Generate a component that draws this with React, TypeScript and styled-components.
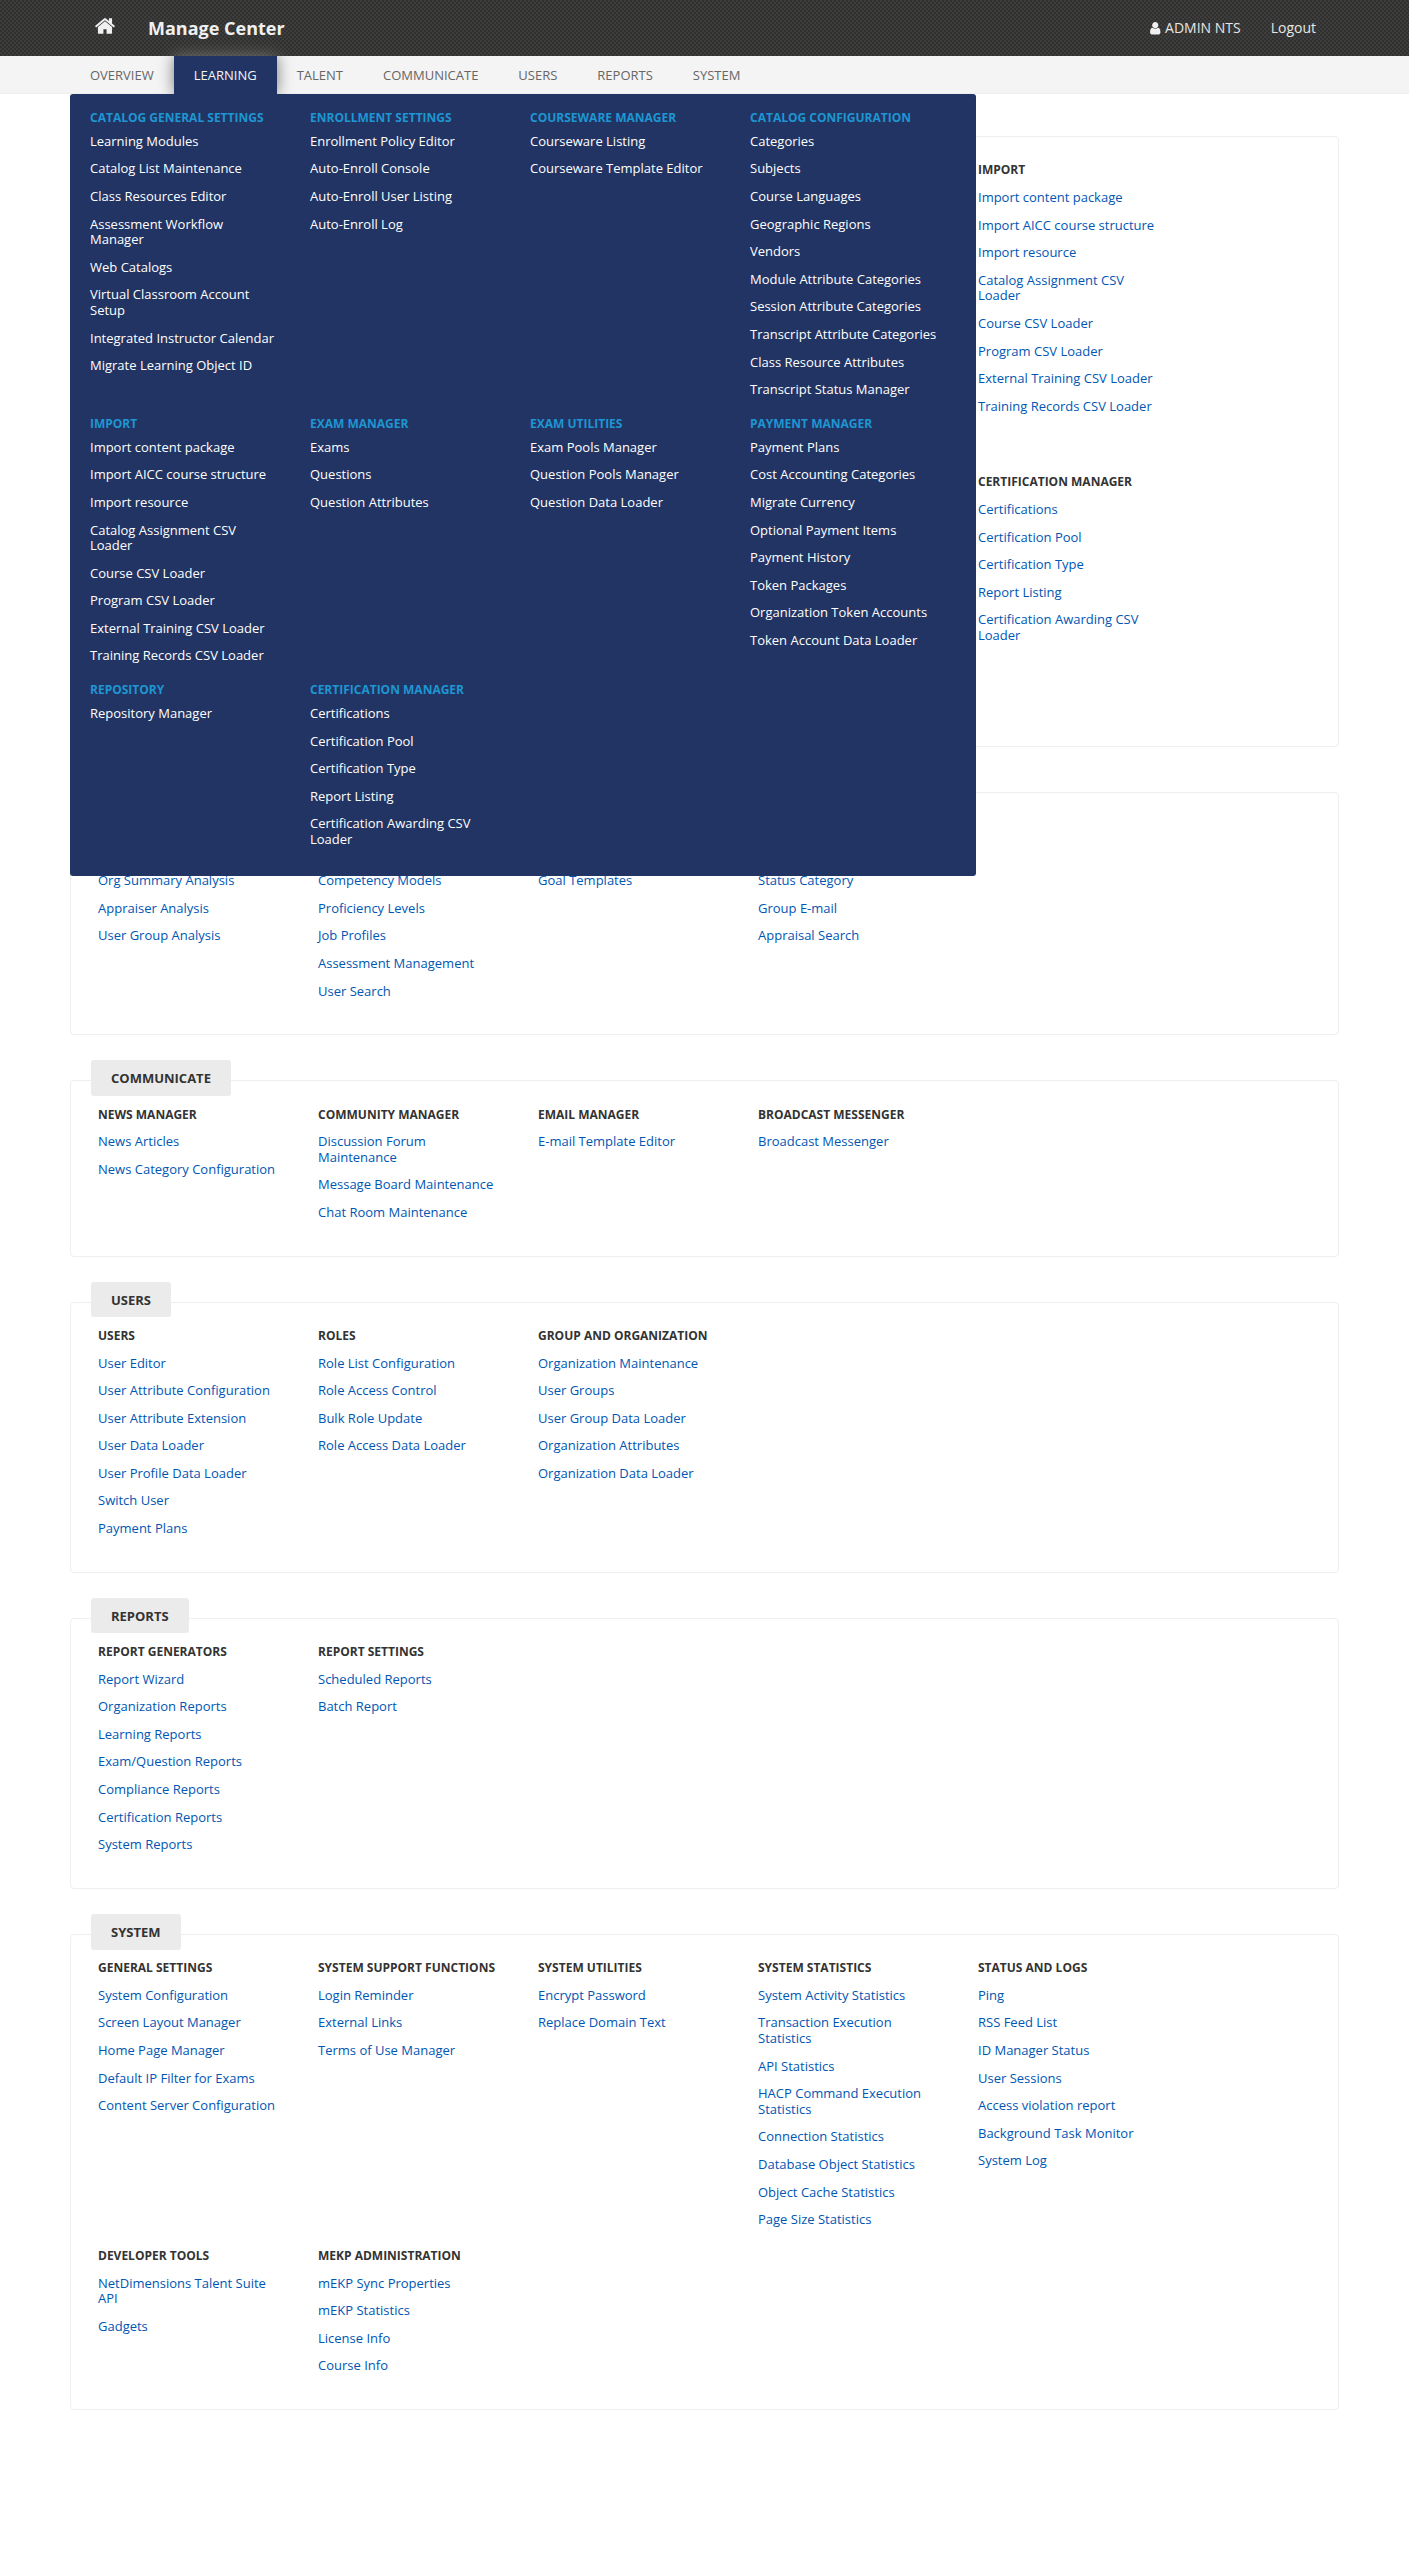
import React from 'react';
import styled, { createGlobalStyle, css } from 'styled-components';

const GlobalStyle = createGlobalStyle`
  * { box-sizing: border-box; }
  body {
    margin: 0;
    background: #fff;
    color: #333;
    font-family: "Open Sans", "Noto Sans", sans-serif;
    font-size: 13px;
    line-height: 15.6px;
  }
  ul { list-style: none; margin: 0; padding: 0; }
  a { color: inherit; text-decoration: none; }
`;

type Group = { title: string; links: string[] };
type Section = { name: string; groups: Group[] };

const g = (title: string, ...links: string[]): Group => ({ title, links });

const catalogGeneral = g('CATALOG GENERAL SETTINGS', 'Learning Modules', 'Catalog List Maintenance', 'Class Resources Editor', 'Assessment Workflow Manager', 'Web Catalogs', 'Virtual Classroom Account Setup', 'Integrated Instructor Calendar', 'Migrate Learning Object ID');
const enrollment = g('ENROLLMENT SETTINGS', 'Enrollment Policy Editor', 'Auto-Enroll Console', 'Auto-Enroll User Listing', 'Auto-Enroll Log');
const courseware = g('COURSEWARE MANAGER', 'Courseware Listing', 'Courseware Template Editor');
const catalogConfig = g('CATALOG CONFIGURATION', 'Categories', 'Subjects', 'Course Languages', 'Geographic Regions', 'Vendors', 'Module Attribute Categories', 'Session Attribute Categories', 'Transcript Attribute Categories', 'Class Resource Attributes', 'Transcript Status Manager');
const importer = g('IMPORT', 'Import content package', 'Import AICC course structure', 'Import resource', 'Catalog Assignment CSV Loader', 'Course CSV Loader', 'Program CSV Loader', 'External Training CSV Loader', 'Training Records CSV Loader');
const examManager = g('EXAM MANAGER', 'Exams', 'Questions', 'Question Attributes');
const examUtilities = g('EXAM UTILITIES', 'Exam Pools Manager', 'Question Pools Manager', 'Question Data Loader');
const payment = g('PAYMENT MANAGER', 'Payment Plans', 'Cost Accounting Categories', 'Migrate Currency', 'Optional Payment Items', 'Payment History', 'Token Packages', 'Organization Token Accounts', 'Token Account Data Loader');
const repository = g('REPOSITORY', 'Repository Manager');
const certification = g('CERTIFICATION MANAGER', 'Certifications', 'Certification Pool', 'Certification Type', 'Report Listing', 'Certification Awarding CSV Loader');

const learning = [catalogGeneral, enrollment, courseware, catalogConfig, importer, examManager, examUtilities, payment, repository, certification];

const sections: Section[] = [
  { name: 'LEARNING', groups: learning },
  {
    name: 'TALENT',
    groups: [
      g('ANALYSIS', 'Analysis', 'Org Summary Analysis', 'Appraiser Analysis', 'User Group Analysis'),
      g('COMPETENCIES', 'Competencies', 'Competency Models', 'Proficiency Levels', 'Job Profiles', 'Assessment Management', 'User Search'),
      g('GOALS', 'Goals', 'Goal Templates'),
      g('APPRAISALS', 'Appraisals', 'Status Category', 'Group E-mail', 'Appraisal Search'),
    ],
  },
  {
    name: 'COMMUNICATE',
    groups: [
      g('NEWS MANAGER', 'News Articles', 'News Category Configuration'),
      g('COMMUNITY MANAGER', 'Discussion Forum Maintenance', 'Message Board Maintenance', 'Chat Room Maintenance'),
      g('EMAIL MANAGER', 'E-mail Template Editor'),
      g('BROADCAST MESSENGER', 'Broadcast Messenger'),
    ],
  },
  {
    name: 'USERS',
    groups: [
      g('USERS', 'User Editor', 'User Attribute Configuration', 'User Attribute Extension', 'User Data Loader', 'User Profile Data Loader', 'Switch User', 'Payment Plans'),
      g('ROLES', 'Role List Configuration', 'Role Access Control', 'Bulk Role Update', 'Role Access Data Loader'),
      g('GROUP AND ORGANIZATION', 'Organization Maintenance', 'User Groups', 'User Group Data Loader', 'Organization Attributes', 'Organization Data Loader'),
    ],
  },
  {
    name: 'REPORTS',
    groups: [
      g('REPORT GENERATORS', 'Report Wizard', 'Organization Reports', 'Learning Reports', 'Exam/Question Reports', 'Compliance Reports', 'Certification Reports', 'System Reports'),
      g('REPORT SETTINGS', 'Scheduled Reports', 'Batch Report'),
    ],
  },
  {
    name: 'SYSTEM',
    groups: [
      g('GENERAL SETTINGS', 'System Configuration', 'Screen Layout Manager', 'Home Page Manager', 'Default IP Filter for Exams', 'Content Server Configuration'),
      g('SYSTEM SUPPORT FUNCTIONS', 'Login Reminder', 'External Links', 'Terms of Use Manager'),
      g('SYSTEM UTILITIES', 'Encrypt Password', 'Replace Domain Text'),
      g('SYSTEM STATISTICS', 'System Activity Statistics', 'Transaction Execution Statistics', 'API Statistics', 'HACP Command Execution Statistics', 'Connection Statistics', 'Database Object Statistics', 'Object Cache Statistics', 'Page Size Statistics'),
      g('STATUS AND LOGS', 'Ping', 'RSS Feed List', 'ID Manager Status', 'User Sessions', 'Access violation report', 'Background Task Monitor', 'System Log'),
      g('DEVELOPER TOOLS', 'NetDimensions Talent Suite API', 'Gadgets'),
      g('MEKP ADMINISTRATION', 'mEKP Sync Properties', 'mEKP Statistics', 'License Info', 'Course Info'),
    ],
  },
];

const menuRows = [
  [catalogGeneral, enrollment, courseware, catalogConfig],
  [importer, examManager, examUtilities, payment],
  [repository, certification],
];

const tabs = ['OVERVIEW', 'LEARNING', 'TALENT', 'COMMUNICATE', 'USERS', 'REPORTS', 'SYSTEM'];

const Page = styled.div`
  min-height: 2552px;
`;

const Header = styled.header`
  display: flex;
  align-items: center;
  height: 56px;
  padding: 0 93px 0 93.5px;
  color: #f0f0f0;
  background-color: #3d3d3b;
  background-image:
    linear-gradient(45deg, #2f2f2f 25%, transparent 25%, transparent 75%, #2f2f2f 75%),
    linear-gradient(45deg, #323232 25%, transparent 25%, transparent 75%, #323232 75%);
  background-size: 4px 4px;
  background-position: 0 0, 2px 2px;
`;

const HomeIcon = styled.svg`
  width: 22px;
  height: 22px;
  margin-top: -4px;
  fill: #f0f0f0;
`;

const Title = styled.h1`
  margin: 0 auto 0 32.5px;
  font-size: 18px;
  line-height: 24px;
  font-weight: 700;
`;

const UserIcon = styled.svg`
  width: 14.5px;
  height: 14.5px;
  margin-right: 2.5px;
  fill: #f0f0f0;
`;

const HeaderLink = styled.a`
  display: flex;
  align-items: center;
  margin-left: 30px;
  font-size: 14px;
  line-height: 20px;
  color: #e6e6e6;
`;

const Nav = styled.nav`
  position: relative;
  display: flex;
  height: 38px;
  padding-left: 70px;
  background: #f4f4f4;
  border-bottom: 1px solid #eee;
`;

const Tab = styled.a<{ $active?: boolean }>`
  height: 38px;
  padding: 0 20px;
  line-height: 38px;
  color: #666;
  ${(p) =>
    p.$active &&
    css`
      color: #f4f4f4;
      background: #223463;
      box-shadow: 0 0 15px #777;
      clip-path: inset(-20px -20px 0 -20px);
    `}
`;

const MegaMenu = styled.div`
  position: absolute;
  top: 38px;
  left: 70px;
  z-index: 2;
  width: 906px;
  height: 782px;
  padding: 14px 0 0 20px;
  color: #fff;
  background: #223463;
  border-radius: 3px;
`;

const Row = styled.div`
  display: flex;
`;

const Main = styled.main`
  display: flex;
  flex-direction: column;
  gap: 45px;
  padding: 42px 70px 0;
`;

const Panel = styled.section`
  display: flex;
  flex-direction: column;
  align-items: flex-start;
  padding: 0 0 17.8px 20px;
  border: 1px solid #eee;
  border-radius: 4px;
`;

const PanelLabel = styled.h2`
  height: 35.6px;
  margin: -20.8px 0 7.4px;
  padding: 10.8px 20px 9.2px;
  font-size: 13px;
  font-weight: 700;
  background: #ebebeb;
  border-radius: 3px;
`;

const Groups = styled.div`
  display: grid;
  grid-template-columns: repeat(5, 220px);
  padding-left: 7px;
`;

const Column = styled.div<{ $menu?: boolean }>`
  width: 220px;
  padding-right: 32px;
  color: ${(p) => (p.$menu ? '#fff' : '#0056b3')};
`;

const Heading = styled.h3<{ $menu?: boolean }>`
  margin: 0;
  height: ${(p) => (p.$menu ? '25.8px' : '30.8px')};
  padding-top: ${(p) => (p.$menu ? '1.9px' : '3.3px')};
  font-size: 12px;
  font-weight: 700;
  white-space: nowrap;
  color: ${(p) => (p.$menu ? '#1e96d2' : '#333')};
`;

const Links = styled.ul<{ $menu?: boolean }>`
  padding-bottom: ${(p) => (p.$menu ? '4.2px' : '5.2px')};
`;

const LinkItem = styled.li`
  padding-bottom: 12px;
`;

function LinkColumn({ group, menu }: { group: Group; menu?: boolean }) {
  return (
    <Column $menu={menu}>
      <Heading $menu={menu}>{group.title}</Heading>
      <Links $menu={menu}>
        {group.links.map((l) => (
          <LinkItem key={l}>
            <a href="#">{l}</a>
          </LinkItem>
        ))}
      </Links>
    </Column>
  );
}

export default function App() {
  return (
    <Page>
      <GlobalStyle />
      <Header>
        <HomeIcon viewBox="0 0 1792 1792">
          <path d="M1472 992v480q0 26-19 45t-45 19h-384v-384h-256v384h-384q-26 0-45-19t-19-45v-480q0-1 .5-3t.5-3l575-474 575 474q1 2 1 6zm223-69l-62 74q-8 9-21 11h-3q-13 0-21-7l-692-577-692 577q-12 8-24 7-13-2-21-11l-62-74q-8-10-7-23.5t11-21.5l719-599q32-26 76-26t76 26l244 204v-195q0-14 9-23t23-9h192q14 0 23 9t9 23v408l219 182q10 8 11 21.5t-7 23.5z" />
        </HomeIcon>
        <Title>Manage Center</Title>
        <HeaderLink href="#">
          <UserIcon viewBox="0 0 1792 1792">
            <path d="M1536 1399q0 109-62.5 187t-150.5 78h-854q-88 0-150.5-78t-62.5-187q0-85 8.5-160.5t31.5-152 58.5-131 94-89 134.5-34.5q131 128 313 128t313-128q76 0 134.5 34.5t94 89 58.5 131 31.5 152 8.5 160.5zm-256-887q0 159-112.5 271.5t-271.5 112.5-271.5-112.5-112.5-271.5 112.5-271.5 271.5-112.5 271.5 112.5 112.5 271.5z" />
          </UserIcon>
          ADMIN NTS
        </HeaderLink>
        <HeaderLink href="#">Logout</HeaderLink>
      </Header>
      <Nav>
        {tabs.map((t) => (
          <Tab key={t} href="#" $active={t === 'LEARNING'}>
            {t}
          </Tab>
        ))}
        <MegaMenu>
          {menuRows.map((row, i) => (
            <Row key={i}>
              {row.map((group) => (
                <LinkColumn key={group.title} group={group} menu />
              ))}
            </Row>
          ))}
        </MegaMenu>
      </Nav>
      <Main>
        {sections.map((s) => (
          <Panel key={s.name}>
            <PanelLabel>{s.name}</PanelLabel>
            <Groups>
              {s.groups.map((group) => (
                <LinkColumn key={group.title} group={group} />
              ))}
            </Groups>
          </Panel>
        ))}
      </Main>
    </Page>
  );
}
